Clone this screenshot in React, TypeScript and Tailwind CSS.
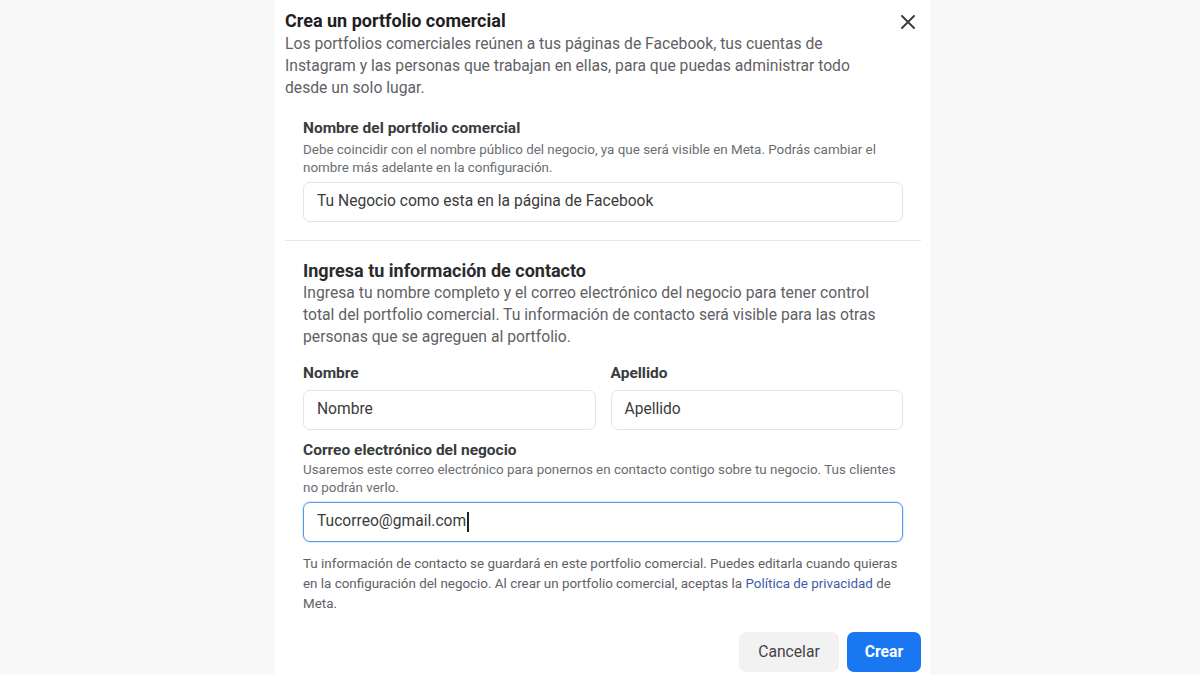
import React from "react";

const font = { fontFamily: 'Roboto, "Noto Sans", Arial, sans-serif' };

function CloseIcon() {
  return (
    <svg width="14" height="14" viewBox="0 0 14 14" fill="none">
      <path d="M1 1L13 13M13 1L1 13" stroke="#3a3b3c" strokeWidth="1.9" strokeLinecap="round" />
    </svg>
  );
}

function Field({ value, focused, caret }: { value: string; focused?: boolean; caret?: boolean }) {
  return (
    <div
      className={
        "h-[40px] w-full rounded-[7px] bg-white px-[13px] flex items-center text-[15.6px] text-[#3b3b3b] " +
        (focused
          ? "border-[1.5px] border-[#5a97ef] shadow-[0_0_0_1px_rgba(24,119,242,0.15)]"
          : "border border-[#e3e4e6]")
      }
    >
      <span>{value}</span>
      {caret && <span className="inline-block w-[1.5px] h-[20px] bg-[#222] ml-[1px]" />}
    </div>
  );
}

function Lines({ lines, className }: { lines: string[]; className: string }) {
  return (
    <div className={className}>
      {lines.map((l) => (
        <div key={l} className="whitespace-nowrap">
          {l}
        </div>
      ))}
    </div>
  );
}

export default function App() {
  return (
    <div className="w-[1200px] h-[675px] bg-[#f8f8f8] overflow-hidden" style={font}>
      <div className="ml-[275px] w-[655px] h-full bg-white pl-[10px] pr-[9px] pt-[10px]">
        {/* Header */}
        <div className="flex items-start justify-between pr-[6px]">
          <div>
            <h1 className="text-[18px] leading-[22px] font-bold text-[#1f2022]">Crea un portfolio comercial</h1>
            <Lines
              className="text-[15.7px] leading-[22px] text-[#5f6165] mt-[1px]"
              lines={[
                "Los portfolios comerciales reúnen a tus páginas de Facebook, tus cuentas de",
                "Instagram y las personas que trabajan en ellas, para que puedas administrar todo",
                "desde un solo lugar.",
              ]}
            />
          </div>
          <button className="mt-[5px]">
            <CloseIcon />
          </button>
        </div>

        {/* Portfolio name */}
        <div className="pl-[18px] pr-[18px] pt-[19px] pb-[18px]">
          <div className="text-[15.5px] leading-[20px] font-bold text-[#3a3b3c]">Nombre del portfolio comercial</div>
          <Lines
            className="text-[13.4px] leading-[18px] text-[#6b6d71] mt-[3px]"
            lines={[
              "Debe coincidir con el nombre público del negocio, ya que será visible en Meta. Podrás cambiar el",
              "nombre más adelante en la configuración.",
            ]}
          />
          <div className="mt-[5px]">
            <Field value="Tu Negocio como esta en la página de Facebook" />
          </div>
        </div>

        <div className="h-px bg-[#e6e6e6]" />

        {/* Contact info */}
        <div className="pl-[18px] pr-[18px] pt-[19px]">
          <h2 className="text-[18px] leading-[22px] font-bold text-[#2a2b2d]">Ingresa tu información de contacto</h2>
          <Lines
            className="text-[15.7px] leading-[22px] text-[#5f6165]"
            lines={[
              "Ingresa tu nombre completo y el correo electrónico del negocio para tener control",
              "total del portfolio comercial. Tu información de contacto será visible para las otras",
              "personas que se agreguen al portfolio.",
            ]}
          />

          <div className="grid grid-cols-2 gap-[15px] mt-[15px]">
            <div>
              <div className="text-[15.5px] leading-[20px] font-bold text-[#3a3b3c]">Nombre</div>
              <div className="mt-[7px]">
                <Field value="Nombre" />
              </div>
            </div>
            <div>
              <div className="text-[15.5px] leading-[20px] font-bold text-[#3a3b3c]">Apellido</div>
              <div className="mt-[7px]">
                <Field value="Apellido" />
              </div>
            </div>
          </div>

          <div className="mt-[10px] text-[15.5px] leading-[20px] font-bold text-[#3a3b3c]">Correo electrónico del negocio</div>
          <Lines
            className="text-[13.4px] leading-[18px] text-[#6b6d71] mt-[1px]"
            lines={[
              "Usaremos este correo electrónico para ponernos en contacto contigo sobre tu negocio. Tus clientes",
              "no podrán verlo.",
            ]}
          />
          <div className="mt-[5px]">
            <Field value="Tucorreo@gmail.com" focused caret />
          </div>

          <div className="mt-[12px] text-[13.4px] leading-[20px] text-[#5f6165]">
            <div className="whitespace-nowrap">
              Tu información de contacto se guardará en este portfolio comercial. Puedes editarla cuando quieras
            </div>
            <div className="whitespace-nowrap">
              en la configuración del negocio. Al crear un portfolio comercial, aceptas la{" "}
              <span className="text-[#3b5da8]">Política de privacidad</span> de
            </div>
            <div>Meta.</div>
          </div>
        </div>

        {/* Actions */}
        <div className="flex justify-end gap-[8px] mt-[18px]">
          <button className="h-[40px] w-[100px] rounded-[7px] bg-[#f2f2f2] text-[15.7px] font-normal text-[#444]">
            Cancelar
          </button>
          <button className="h-[40px] w-[74px] rounded-[7px] bg-[#1a77f2] text-[15.7px] font-bold text-white">
            Crear
          </button>
        </div>
      </div>
    </div>
  );
}
